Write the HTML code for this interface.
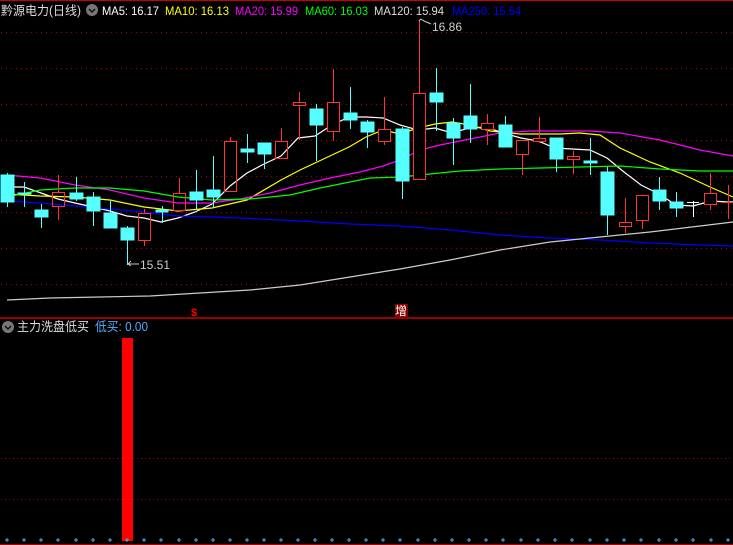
<!DOCTYPE html>
<html><head><meta charset="utf-8"><style>
html,body{margin:0;padding:0;background:#000;width:733px;height:545px;overflow:hidden}
svg{display:block}
text{font-family:"Liberation Sans","Noto Sans CJK SC",sans-serif}
</style></head><body>
<svg width="733" height="545" viewBox="0 0 733 545" xmlns="http://www.w3.org/2000/svg">
<rect width="733" height="545" fill="#000"/>
<line x1="0" y1="0.5" x2="733" y2="0.5" stroke="#c00" stroke-width="1"/>
<g stroke="#a00" stroke-width="1" stroke-dasharray="1 4">
<line x1="1" y1="32.5" x2="733" y2="32.5"/>
<line x1="1" y1="68.5" x2="733" y2="68.5"/>
<line x1="1" y1="104.5" x2="733" y2="104.5"/>
<line x1="1" y1="140.5" x2="733" y2="140.5"/>
<line x1="1" y1="176.5" x2="733" y2="176.5"/>
<line x1="1" y1="212.5" x2="733" y2="212.5"/>
<line x1="1" y1="248.5" x2="733" y2="248.5"/>
<line x1="1" y1="284.5" x2="733" y2="284.5"/>
<line x1="1" y1="458.5" x2="733" y2="458.5" stroke-dasharray="1 3"/>
<line x1="1" y1="499.5" x2="733" y2="499.5" stroke-dasharray="1 3"/>
</g>
<g fill="none" stroke-width="1.2">
<polyline stroke="#fff" points="7,187 24,187 41,193 58,199 75,203 93,207 110,211 127,216 144,218 161,222 178,218 195,212 212,204 230,186 247,173 264,164 281,156 298,138 315,136 332,125 349,117 366,117 383,118 400,125 418,130 435,128 452,133 469,128 486,127 503,133 521,138 538,141 555,148 572,149 590,150 607,158 624,172 641,185 659,194 676,205 693,206 711,201 728,202 733,202"/>
<polyline stroke="#ff0" points="7,194 40,196 75,197 110,200 144,207 178,211 212,208 247,200 281,180 300,170 315,163 332,155 349,147 366,137 383,130 400,134 418,128 435,124 452,122 470,125 490,131 520,134 560,134 580,133 600,135 620,148 650,162 680,173 710,187 733,197"/>
<polyline stroke="#f0f" points="7,175 40,178 75,185 110,190 144,198 178,203 212,203 240,199 270,193 300,185 330,178 360,172 383,166 400,160 420,150 440,145 460,141 480,137 500,133 530,131 560,131 590,131 620,133 660,140 700,150 733,156"/>
<polyline stroke="#0f0" points="7,197 40,190 75,188 110,188 144,191 178,197 212,200 250,199 290,195 320,188 350,182 370,178 400,177 430,174 460,171 500,169 540,168 580,167 620,166 660,169 700,171 733,171"/>
<polyline stroke="#00f" points="7,201 40,203 75,206 110,209 144,212 178,216 212,217 240,218 300,221 350,224 400,226 450,230 500,235 550,238 600,240 650,243 700,245 733,246"/>
<polyline stroke="#ccc" points="7,300 50,298 100,297 150,296 200,293 250,290 300,285 350,277 400,269 450,260 500,250 550,242 600,237 650,232 700,226 733,222"/>
</g>
<g stroke="#5ff" fill="#5ff">
<line x1="7.5" y1="173" x2="7.5" y2="207"/><rect x="1" y="175" width="13" height="27"/>
<line x1="24.5" y1="182" x2="24.5" y2="207"/><rect x="18" y="193" width="13" height="1"/>
<line x1="41.5" y1="204" x2="41.5" y2="228"/><rect x="35" y="210" width="13" height="7"/>
<line x1="76.5" y1="177" x2="76.5" y2="201"/><rect x="70" y="193" width="13" height="6"/>
<line x1="93.5" y1="192" x2="93.5" y2="226"/><rect x="87" y="197" width="13" height="14"/>
<line x1="110.5" y1="201" x2="110.5" y2="228"/><rect x="104" y="213" width="13" height="15"/>
<line x1="127.5" y1="226" x2="127.5" y2="265"/><rect x="121" y="228" width="13" height="12"/>
<line x1="162.5" y1="206" x2="162.5" y2="223"/><rect x="156" y="210" width="12" height="2"/>
<line x1="196.5" y1="170" x2="196.5" y2="210"/><rect x="190" y="192" width="13" height="8"/>
<line x1="213.5" y1="156" x2="213.5" y2="208"/><rect x="207" y="190" width="13" height="7"/>
<line x1="247.5" y1="134" x2="247.5" y2="163"/><rect x="241" y="149" width="13" height="3"/>
<line x1="264.5" y1="143" x2="264.5" y2="169"/><rect x="258" y="143" width="13" height="11"/>
<line x1="316.5" y1="104" x2="316.5" y2="161"/><rect x="310" y="109" width="13" height="16"/>
<line x1="350.5" y1="87" x2="350.5" y2="129"/><rect x="344" y="113" width="13" height="7"/>
<line x1="367.5" y1="120" x2="367.5" y2="148"/><rect x="361" y="122" width="13" height="10"/>
<line x1="402.5" y1="127" x2="402.5" y2="199"/><rect x="396" y="129" width="13" height="52"/>
<line x1="436.5" y1="68" x2="436.5" y2="131"/><rect x="430" y="93" width="13" height="9"/>
<line x1="453.5" y1="118" x2="453.5" y2="165"/><rect x="447" y="123" width="13" height="15"/>
<line x1="470.5" y1="84" x2="470.5" y2="143"/><rect x="464" y="116" width="13" height="13"/>
<line x1="505.5" y1="116" x2="505.5" y2="147"/><rect x="499" y="125" width="13" height="22"/>
<line x1="556.5" y1="138" x2="556.5" y2="172"/><rect x="550" y="138" width="13" height="21"/>
<line x1="590.5" y1="138" x2="590.5" y2="175"/><rect x="584" y="161" width="13" height="2"/>
<line x1="607.5" y1="167" x2="607.5" y2="235"/><rect x="601" y="172" width="13" height="43"/>
<line x1="659.5" y1="177" x2="659.5" y2="210"/><rect x="653" y="190" width="13" height="11"/>
<line x1="676.5" y1="192" x2="676.5" y2="217"/><rect x="670" y="202" width="13" height="6"/>
</g>
<g stroke="#fff"><line x1="693.5" y1="201" x2="693.5" y2="217"/><line x1="687" y1="202.5" x2="699" y2="202.5"/></g>
<g stroke="#f33" fill="none">
<line x1="58.5" y1="175" x2="58.5" y2="192"/><line x1="58.5" y1="207" x2="58.5" y2="220"/><rect x="52.5" y="192.5" width="12" height="14"/>
<line x1="144.5" y1="209" x2="144.5" y2="213"/><line x1="144.5" y1="241" x2="144.5" y2="246"/><rect x="138.5" y="213.5" width="12" height="27"/>
<line x1="179.5" y1="178" x2="179.5" y2="193"/><rect x="173.5" y="193.5" width="12" height="17"/>
<line x1="230.5" y1="137" x2="230.5" y2="141"/><rect x="224.5" y="141.5" width="12" height="50"/>
<line x1="281.5" y1="128" x2="281.5" y2="141"/><rect x="275.5" y="141.5" width="12" height="17"/>
<line x1="299.5" y1="92" x2="299.5" y2="140"/><rect x="293.5" y="102.5" width="12" height="3" fill="#000"/>
<line x1="333.5" y1="69" x2="333.5" y2="141"/><rect x="327.5" y="102.5" width="12" height="29" fill="#000"/>
<line x1="384.5" y1="97" x2="384.5" y2="145"/><rect x="378.5" y="129.5" width="12" height="12" fill="#000"/>
<line x1="419.5" y1="21" x2="419.5" y2="93"/><rect x="413.5" y="93.5" width="12" height="86" fill="#000"/>
<line x1="487.5" y1="114" x2="487.5" y2="145"/><rect x="481.5" y="123.5" width="12" height="6" fill="#000"/>
<line x1="522.5" y1="155" x2="522.5" y2="175"/><rect x="516.5" y="140.5" width="12" height="14" fill="#000"/>
<line x1="539.5" y1="117" x2="539.5" y2="143"/><rect x="533.5" y="138.5" width="12" height="3" fill="#000"/>
<line x1="573.5" y1="151" x2="573.5" y2="174"/><rect x="567.5" y="156.5" width="12" height="3" fill="#000"/>
<line x1="625.5" y1="198" x2="625.5" y2="233"/><rect x="619.5" y="222.5" width="12" height="4" fill="#000"/>
<line x1="642.5" y1="221" x2="642.5" y2="229"/><rect x="636.5" y="195.5" width="12" height="25" fill="#000"/>
<line x1="710.5" y1="173" x2="710.5" y2="210"/><rect x="704.5" y="193.5" width="12" height="11" fill="#000"/>
<line x1="728.5" y1="185" x2="728.5" y2="219"/><line x1="722" y1="202.5" x2="733" y2="202.5"/>
</g>
<g stroke="#ccc" fill="none"><path d="M419 21 L421 19 M421 19 L424 21 L431 24"/><path d="M128 264 L131 261 M128 264 L131 266 M128 264 L139 264"/></g>
<text x="432" y="31" font-size="12" fill="#ccc">16.86</text>
<text x="140" y="269" font-size="12" fill="#ccc">15.51</text>
<text x="1" y="15" font-size="12.5" fill="#ddd" textLength="80" lengthAdjust="spacingAndGlyphs">黔源电力(日线)</text>
<circle cx="92" cy="10" r="6" fill="#777"/><path d="M89 9 L92 12 L95 9" stroke="#111" stroke-width="1.5" fill="none"/>
<text x="102" y="15" font-size="12" fill="#fff" textLength="57" lengthAdjust="spacingAndGlyphs">MA5: 16.17</text>
<text x="165" y="15" font-size="12" fill="#ff0" textLength="64" lengthAdjust="spacingAndGlyphs">MA10: 16.13</text>
<text x="235" y="15" font-size="12" fill="#f0f" textLength="63" lengthAdjust="spacingAndGlyphs">MA20: 15.99</text>
<text x="305" y="15" font-size="12" fill="#0f0" textLength="63" lengthAdjust="spacingAndGlyphs">MA60: 16.03</text>
<text x="374" y="15" font-size="12" fill="#ddd" textLength="70" lengthAdjust="spacingAndGlyphs">MA120: 15.94</text>
<text x="452" y="15" font-size="12" fill="#00f" textLength="69" lengthAdjust="spacingAndGlyphs">MA250: 15.54</text>
<text x="191" y="316" font-size="11" font-weight="bold" fill="#f00">$</text>
<rect x="395" y="304" width="13" height="13" fill="#800"/>
<text x="395" y="315" font-size="12" fill="#fff">增</text>
<line x1="0" y1="318" x2="733" y2="318" stroke="#c00" stroke-width="1.5"/>
<circle cx="8" cy="327" r="6" fill="#777"/><path d="M5 326 L8 329 L11 326" stroke="#111" stroke-width="1.5" fill="none"/>
<text x="17" y="331" font-size="12.5" fill="#ddd" textLength="72" lengthAdjust="spacingAndGlyphs">主力洗盘低买</text>
<text x="95" y="331" font-size="12.5" fill="#5af" textLength="53" lengthAdjust="spacingAndGlyphs">低买: 0.00</text>
<rect x="122" y="338" width="11" height="203" fill="#f00"/>
<g stroke="#5af" stroke-width="1">
<path d="M5 540h4M7 538v4 M22 540h4M24 538v4 M39 540h4M41 538v4 M56 540h4M58 538v4 M74 540h4M76 538v4 M91 540h4M93 538v4 M108 540h4M110 538v4 M125 540h4M127 538v4 M142 540h4M144 538v4 M159 540h4M161 538v4 M177 540h4M179 538v4 M194 540h4M196 538v4 M211 540h4M213 538v4 M228 540h4M230 538v4 M245 540h4M247 538v4 M262 540h4M264 538v4 M279 540h4M281 538v4 M296 540h4M298 538v4 M313 540h4M315 538v4 M330 540h4M332 538v4 M347 540h4M349 538v4 M364 540h4M366 538v4 M381 540h4M383 538v4 M398 540h4M400 538v4 M416 540h4M418 538v4 M433 540h4M435 538v4 M450 540h4M452 538v4 M467 540h4M469 538v4 M484 540h4M486 538v4 M501 540h4M503 538v4 M519 540h4M521 538v4 M536 540h4M538 538v4 M553 540h4M555 538v4 M570 540h4M572 538v4 M588 540h4M590 538v4 M605 540h4M607 538v4 M622 540h4M624 538v4 M639 540h4M641 538v4 M657 540h4M659 538v4 M674 540h4M676 538v4 M691 540h4M693 538v4 M709 540h4M711 538v4 M726 540h4M728 538v4"/>
</g>
<line x1="0" y1="544.5" x2="733" y2="544.5" stroke="#a00" stroke-width="1"/>
</svg>
</body></html>
